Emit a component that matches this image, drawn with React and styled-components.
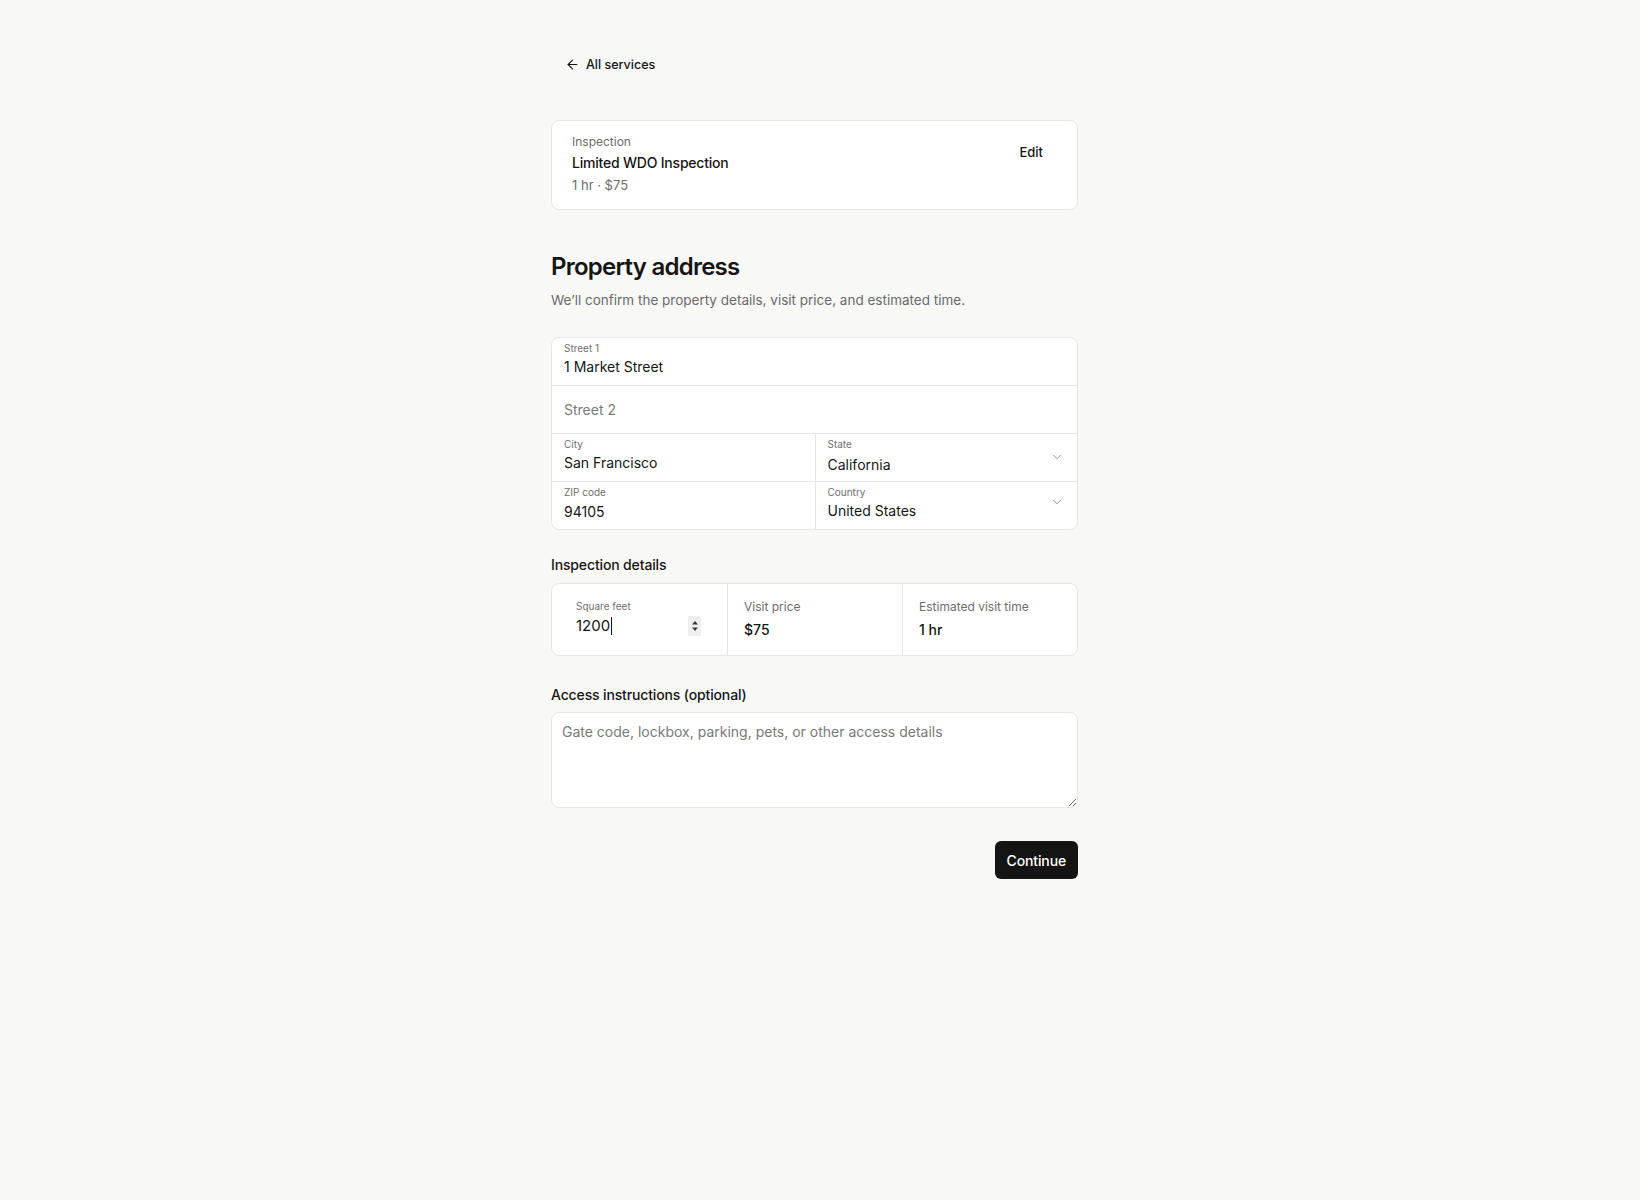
import React from 'react';
import styled, { createGlobalStyle } from 'styled-components';
import { ArrowLeft, ChevronDown } from 'lucide-react';

const GlobalStyle = createGlobalStyle`
  * { box-sizing: border-box; }
  body {
    margin: 0;
    background: #f8f8f7;
    font-family: Inter, "Noto Sans", "Liberation Sans", sans-serif;
    color: #161616;
    -webkit-font-smoothing: antialiased;
  }
`;

const Page = styled.div`
  min-height: 1200px;
  padding: 48px 11px 48px 0;
`;

const Column = styled.main`
  width: 527px;
  margin: 0 auto;
  display: flex;
  flex-direction: column;
`;

const BackLink = styled.button`
  align-self: flex-start;
  display: flex;
  align-items: center;
  gap: 6px;
  height: 32px;
  padding: 0 12px 0 14px;
  border: none;
  background: transparent;
  font: inherit;
  font-size: 12.5px;
  font-weight: 500;
  color: #161616;
  cursor: pointer;
`;

const ServiceCard = styled.section`
  margin-top: 40px;
  display: flex;
  justify-content: space-between;
  align-items: flex-start;
  padding: 13px 20px 14px;
  background: #fff;
  border: 1px solid #e6e6e4;
  border-radius: 8px;
`;

const ServiceInfo = styled.div`
  display: flex;
  flex-direction: column;
`;

const Eyebrow = styled.div`
  font-size: 12px;
  line-height: 16px;
  color: #6d6d6d;
`;

const ServiceName = styled.div`
  margin-top: 3px;
  font-size: 14px;
  line-height: 20px;
  font-weight: 500;
  letter-spacing: -0.015em;
`;

const Meta = styled.div`
  margin-top: 2px;
  font-size: 13px;
  line-height: 20px;
  color: #6d6d6d;
`;

const GhostButton = styled.button`
  height: 32px;
  margin-top: 2px;
  padding: 0 14px;
  border: none;
  border-radius: 6px;
  background: transparent;
  font: inherit;
  font-size: 13px;
  font-weight: 500;
  color: #161616;
  cursor: pointer;
`;

const Heading = styled.h1`
  margin: 41px 0 0;
  font-size: 24px;
  line-height: 32px;
  font-weight: 600;
  letter-spacing: -0.032em;
`;

const Subtitle = styled.p`
  margin: 7px 0 0;
  font-size: 13.5px;
  line-height: 20px;
  color: #6a6a6a;
`;

const FieldGroup = styled.div`
  margin-top: 27px;
  background: #fff;
  border: 1px solid #e6e6e4;
  border-radius: 8px;
  overflow: hidden;
`;

const FieldRow = styled.div`
  display: grid;
  grid-template-columns: ${(p) => (p.split ? '1fr 1fr' : '1fr')};
  & + & {
    border-top: 1px solid #e6e6e4;
  }
`;

const Field = styled.label`
  position: relative;
  display: flex;
  flex-direction: column;
  justify-content: ${(p) => (p.placeholder ? 'center' : 'flex-start')};
  height: 47px;
  padding: ${(p) => (p.placeholder ? '0 12px' : '4px 12px 0')};
  & + & {
    border-left: 1px solid #e6e6e4;
  }
`;

const TinyLabel = styled.span`
  font-size: 10px;
  line-height: 12px;
  color: #6f6f6f;
`;

const TextInput = styled.input`
  width: 100%;
  padding: 0;
  margin-top: ${(p) => 3 + (p.$offset || 0)}px;
  border: none;
  outline: none;
  background: transparent;
  font: inherit;
  font-size: 14px;
  line-height: 20px;
  height: 20px;
  color: #161616;
  &::placeholder {
    color: #7a7a7a;
  }
`;

const PlainInput = styled(TextInput)`
  margin-top: 0;
`;

const Chevron = styled(ChevronDown)`
  position: absolute;
  right: 13px;
  top: ${(p) => p.$top}px;
  color: #7d7d7d;
`;

const SectionLabel = styled.div`
  margin-top: ${(p) => p.$top}px;
  font-size: 14px;
  line-height: 20px;
  font-weight: 500;
  letter-spacing: -0.01em;
`;

const DetailsGrid = styled.div`
  margin-top: 8px;
  display: grid;
  grid-template-columns: repeat(3, 1fr);
  height: 73px;
  background: #fff;
  border: 1px solid #e6e6e4;
  border-radius: 8px;
  overflow: hidden;
`;

const DetailCell = styled.div`
  display: flex;
  flex-direction: column;
  justify-content: center;
  padding: 0 16px;
  & + & {
    border-left: 1px solid #e6e6e4;
  }
`;

const NumberBox = styled.div`
  position: relative;
  display: flex;
  flex-direction: column;
  padding: 0 8px;
  margin-top: -4px;
`;

const NumberValue = styled.div`
  display: flex;
  align-items: center;
  margin-top: 4px;
  font-size: 15px;
  line-height: 20px;
  height: 20px;
`;

const Caret = styled.span`
  display: inline-block;
  width: 1px;
  height: 18px;
  margin-left: 1px;
  background: #161616;
`;

const Spinner = styled.div`
  position: absolute;
  right: 10px;
  bottom: 0;
  width: 13px;
  height: 20px;
  background: #efefef;
  border-radius: 2px;
  display: flex;
  align-items: center;
  justify-content: center;
`;

const DetailLabel = styled.div`
  font-size: 12px;
  line-height: 16px;
  color: #6d6d6d;
`;

const DetailValue = styled.div`
  margin-top: 5px;
  font-size: 14px;
  line-height: 20px;
  font-weight: 500;
`;

const Notes = styled.textarea`
  margin-top: 7px;
  width: 100%;
  height: 96px;
  padding: 9px 10px;
  background: #fff;
  border: 1px solid #e6e6e4;
  border-radius: 8px;
  font: inherit;
  font-size: 14px;
  line-height: 20px;
  color: #161616;
  resize: vertical;
  outline: none;
  &::placeholder {
    color: #7a7a7a;
  }
`;

const Actions = styled.div`
  margin-top: 33px;
  display: flex;
  justify-content: flex-end;
`;

const PrimaryButton = styled.button`
  height: 38px;
  padding: 0 12px;
  border: none;
  border-radius: 6px;
  background: #141414;
  color: #fff;
  font: inherit;
  font-size: 14px;
  font-weight: 500;
  letter-spacing: -0.01em;
  cursor: pointer;
`;

const SpinArrows = () => (
  <svg width="8" height="14" viewBox="0 0 8 14">
    <path d="M4 2 L7 5.5 H1 Z" fill="#3a3a3a" />
    <path d="M4 12 L7 8.5 H1 Z" fill="#3a3a3a" />
  </svg>
);

export default function App() {
  return (
    <>
      <GlobalStyle />
      <Page>
        <Column>
          <BackLink>
            <ArrowLeft size={15} strokeWidth={1.75} />
            All services
          </BackLink>

          <ServiceCard>
            <ServiceInfo>
              <Eyebrow>Inspection</Eyebrow>
              <ServiceName>Limited WDO Inspection</ServiceName>
              <Meta>1 hr · $75</Meta>
            </ServiceInfo>
            <GhostButton>Edit</GhostButton>
          </ServiceCard>

          <Heading>Property address</Heading>
          <Subtitle>We’ll confirm the property details, visit price, and estimated time.</Subtitle>

          <FieldGroup>
            <FieldRow>
              <Field>
                <TinyLabel>Street 1</TinyLabel>
                <TextInput defaultValue="1 Market Street" />
              </Field>
            </FieldRow>
            <FieldRow>
              <Field placeholder>
                <PlainInput placeholder="Street 2" />
              </Field>
            </FieldRow>
            <FieldRow split>
              <Field>
                <TinyLabel>City</TinyLabel>
                <TextInput defaultValue="San Francisco" />
              </Field>
              <Field>
                <TinyLabel>State</TinyLabel>
                <TextInput $offset={2} defaultValue="California" readOnly />
                <Chevron $top={16} size={14} strokeWidth={1.5} />
              </Field>
            </FieldRow>
            <FieldRow split>
              <Field>
                <TinyLabel>ZIP code</TinyLabel>
                <TextInput $offset={1} defaultValue="94105" />
              </Field>
              <Field>
                <TinyLabel>Country</TinyLabel>
                <TextInput defaultValue="United States" readOnly />
                <Chevron $top={13} size={14} strokeWidth={1.5} />
              </Field>
            </FieldRow>
          </FieldGroup>

          <SectionLabel $top={25}>Inspection details</SectionLabel>
          <DetailsGrid>
            <DetailCell>
              <NumberBox>
                <TinyLabel>Square feet</TinyLabel>
                <NumberValue>
                  1200
                  <Caret />
                </NumberValue>
                <Spinner>
                  <SpinArrows />
                </Spinner>
              </NumberBox>
            </DetailCell>
            <DetailCell>
              <DetailLabel>Visit price</DetailLabel>
              <DetailValue>$75</DetailValue>
            </DetailCell>
            <DetailCell>
              <DetailLabel>Estimated visit time</DetailLabel>
              <DetailValue>1 hr</DetailValue>
            </DetailCell>
          </DetailsGrid>

          <SectionLabel $top={29}>Access instructions (optional)</SectionLabel>
          <Notes placeholder="Gate code, lockbox, parking, pets, or other access details" />

          <Actions>
            <PrimaryButton>Continue</PrimaryButton>
          </Actions>
        </Column>
      </Page>
    </>
  );
}
